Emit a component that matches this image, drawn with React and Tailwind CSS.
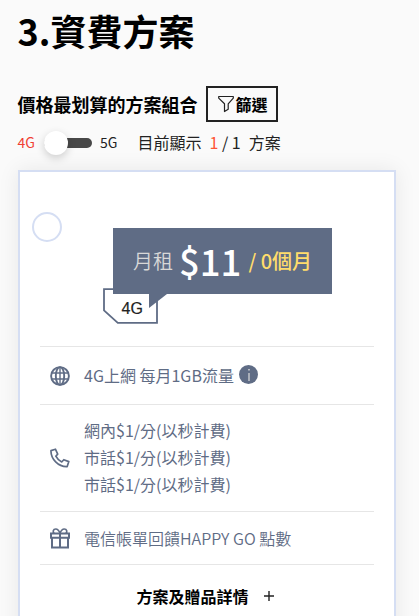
import React, { useState } from 'react';

const PlanRow = ({ icon, className, children }) => (
  <li className={`flex flex-row items-center border-t border-[#e6e6e6] text-[#5f6c85] ${className}`}>
    <div className="flex w-5 shrink-0 ml-[10.5px] mr-[14px]">{icon}</div>
    <div className="pb-0.5 text-base">{children}</div>
  </li>
);

const GlobeIcon = () => (
  <svg width="20" height="20" viewBox="0 0 20 20" fill="none" stroke="currentColor" strokeWidth="1.9">
    <circle cx="10" cy="10" r="8.9" />
    <ellipse cx="10" cy="10" rx="4.2" ry="8.9" />
    <path d="M1.6 7h16.8M1.6 13h16.8M10 1v18" strokeWidth="1.4" />
  </svg>
);

const PhoneIcon = () => (
  <svg width="20" height="20" viewBox="0 0 20 20" fill="none" stroke="currentColor" strokeWidth="1.7" strokeLinejoin="round">
    <path d="M5.4 1.2L1 2.6C.6 11 8.4 19 17.2 18.6L18.8 13.6 13.8 11.7 11.7 14C9.2 12.8 7.2 10.8 5.8 8.2L7.7 6.1Z" />
  </svg>
);

const GiftIcon = () => (
  <svg width="20" height="21" viewBox="0 0 20 21" fill="none" stroke="currentColor" strokeWidth="2">
    <path d="M1 5.5h18v4.3H1zM2 9.8h16v9.7H2zM10 5.5v14" />
    <path d="M10 5.2C9 2.6 7.7 1 5.8 1 3 1 2.5 4.1 4.2 5.4M10 5.2C11 2.6 12.3 1 14.2 1c2.8 0 3.3 3.1 1.6 4.4" strokeWidth="1.7" />
  </svg>
);

const PriceTag = () => (
  <div className="relative mx-auto w-[219px] h-[66px] bg-[#5f6c85]">
    <svg className="absolute left-[-10px] top-[60px]" width="58" height="36" viewBox="0 0 58 36">
      <path d="M1 1.2h53v33.6H14.8L1 22.4z" fill="#fff" stroke="#5f6c85" strokeWidth="1.8" />
      <path d="M10 0h48v6H10z" fill="#5f6c85" />
    </svg>
    <svg className="absolute left-[36px] top-[66px]" width="18" height="14" viewBox="0 0 18 14">
      <path d="M0 0h18L0 14z" fill="#5f6c85" />
    </svg>
    <span className="absolute left-[9px] top-[71px] text-base leading-5 text-[#222] font-['Liberation_Sans',sans-serif] [-webkit-text-stroke:0.2px_#222]">4G</span>
    <div className="flex flex-row items-center pl-[20.5px] whitespace-nowrap">
      <span className="text-xl leading-[66px] font-[350] text-[#d8d8d8]">月租</span>
      <span className="ml-[6px] text-[36.5px] font-medium leading-[64px] text-white">$11</span>
      <span className="ml-[7px] text-xl font-medium leading-[64px] pb-px text-[#ffdc6b]">/ 0個月</span>
    </div>
  </div>
);

const App = () => {
  const [is5G, setIs5G] = useState(false);

  return (
    <div className="h-[616px] w-full overflow-hidden bg-[#fafafa] pl-[17.5px] text-black font-['Noto_Sans_CJK_TC',sans-serif]">
      <h1 className="h-[86px] pt-[4px] text-4xl leading-[52px] font-bold">3.資費方案</h1>
      <div className="flex flex-row items-center h-9">
        <h2 className="text-lg font-bold leading-9">價格最划算的方案組合</h2>
        <button className="ml-[8.5px] flex h-9 w-[72px] flex-row items-center justify-center border-2 border-[#222] pl-px text-base font-bold">
          <svg width="18" height="18" viewBox="0 0 18 18" fill="none" stroke="#222" strokeWidth="1.2" strokeLinejoin="round">
            <path d="M1.7 1.5h14.6v1.6L11.2 8.8v5.4l-3.7 2.3V8.8L1.7 3.1z" />
          </svg>
          篩選
        </button>
      </div>
      <div className="flex flex-row items-center h-12 pb-[7px] whitespace-nowrap">
        <span className={`w-[26.5px] pb-0.5 text-sm ${is5G ? 'text-[#222]' : 'text-[#f03e32]'}`}>4G</span>
        <button onClick={() => setIs5G(!is5G)} className="relative h-6 w-12" aria-label="4G 5G">
          <span className="absolute left-0 top-[7px] h-[10px] w-12 rounded-full bg-[#484848]"></span>
          <span className={`absolute top-0 size-6 rounded-full bg-white shadow-[0_3px_8px_rgba(0,0,0,0.18)] ${is5G ? 'right-0' : 'left-0'}`}></span>
        </button>
        <span className="ml-2 w-[37.5px] pb-0.5 text-sm text-[#222]">5G</span>
        <span className="pb-0.5 text-base text-[#222]">目前顯示</span>
        <span className="ml-2 pb-0.5 text-base text-[#ff5535]">1</span>
        <span className="ml-[3.5px] pb-0.5 text-base text-[#222]">/ 1</span>
        <span className="ml-2 pb-0.5 text-base text-[#222]">方案</span>
      </div>
      <div className="h-[520px] w-[378px] border-2 border-[#d5def3] bg-white px-5 shadow-[0_0_20px_rgba(0,0,0,0.08)]">
        <div className="h-[56px] pt-10">
          <div className="-ml-2 size-[30px] rounded-full border-2 border-[#d5def3]"></div>
        </div>
        <div className="h-[118px] pl-[31px]">
          <PriceTag />
        </div>
        <ul>
          <PlanRow icon={<GlobeIcon />} className="h-[58px]">
            <div className="flex flex-row items-center">
              4G上網 每月1GB流量
              <span className="relative ml-[5.5px] flex size-[19px] items-center justify-center rounded-full bg-[#5f6c85] text-[#ddd]">
                <svg width="4" height="12" viewBox="0 0 4 12" fill="currentColor">
                  <path d="M1.3 0h1.4v1.6H1.3zM1.4 4h1.2v8H1.4z" />
                </svg>
              </span>
            </div>
          </PlanRow>
          <PlanRow icon={<PhoneIcon />} className="h-[107px]">
            <p className="leading-[27px]">網內$1/分(以秒計費)</p>
            <p className="leading-[27px]">市話$1/分(以秒計費)</p>
            <p className="leading-[27px]">市話$1/分(以秒計費)</p>
          </PlanRow>
          <PlanRow icon={<GiftIcon />} className="h-[54px] border-b">
            <p className="pt-px font-[350]">電信帳單回饋HAPPY GO 點數</p>
          </PlanRow>
        </ul>
        <button className="flex w-full flex-row items-center justify-center h-[61px] pr-[2px] text-base font-bold">
          方案及贈品詳情
          <svg className="ml-[14px]" width="12" height="12" viewBox="0 0 12 12" stroke="#222" strokeWidth="1.4">
            <path d="M1 6h10M6 1v10" />
          </svg>
        </button>
      </div>
    </div>
  );
};

export default App;
